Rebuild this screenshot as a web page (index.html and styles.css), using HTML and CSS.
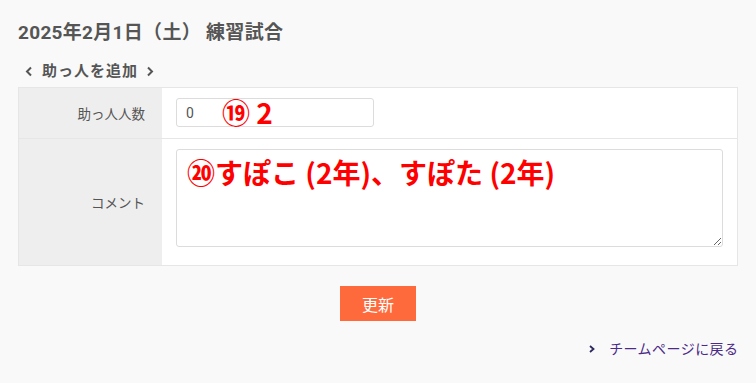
FILE: index.html
```html
<!DOCTYPE html>
<html lang="ja">
<head>
<meta charset="utf-8">
<link rel="stylesheet" href="styles.css">
</head>
<body>
<div class="page">
  <h1 class="title">2025年2月1日（土） 練習試合</h1>
  <div class="subhead">
    <svg class="chev" width="8" height="11" viewBox="0 0 8 11"><path d="M6 1.5 L2 5.5 L6 9.5" fill="none" stroke="#555" stroke-width="2"/></svg>
    <span class="subhead-text">助っ人を追加</span>
    <svg class="chev" width="8" height="11" viewBox="0 0 8 11"><path d="M2 1.5 L6 5.5 L2 9.5" fill="none" stroke="#555" stroke-width="2"/></svg>
  </div>
  <div class="form">
    <div class="row">
      <div class="label">助っ人人数</div>
      <div class="value">
        <input class="num" type="text" value="0">
        <span class="note note1">⑲ 2</span>
      </div>
    </div>
    <div class="row row2">
      <div class="label">コメント</div>
      <div class="value">
        <textarea class="comment"></textarea>
        <span class="note note2">⑳すぽこ (2年)、すぽた (2年)</span>
      </div>
    </div>
  </div>
  <div class="actions">
    <button class="btn">更新</button>
  </div>
  <div class="back">
    <svg class="back-chev" width="8" height="10" viewBox="0 0 8 10"><path d="M2 2 L5.5 5 L2 8" fill="none" stroke="#2b2a5c" stroke-width="1.8"/></svg>
    <a class="back-link" href="#">チームページに戻る</a>
  </div>
</div>
</body>
</html>
```

FILE: styles.css
```css
html, body {
  margin: 0;
  padding: 0;
  background: #f9f9f9;
}
body {
  font-family: Roboto, "Noto Sans CJK JP", sans-serif;
  color: #555;
}
.page {
  padding: 21px 18px 0 18px;
  width: 720px;
}
.title {
  margin: 0;
  font-size: 19px;
  font-weight: bold;
  line-height: 24px;
  color: #555;
  letter-spacing: 0.3px;
}
.subhead {
  display: flex;
  align-items: center;
  gap: 9px;
  margin-top: 16px;
  padding-left: 7px;
  height: 20px;
}
.subhead-text {
  font-size: 15px;
  font-weight: bold;
  line-height: 20px;
  letter-spacing: 1px;
  margin-right: -1px;
}
.chev { display: block; }
.form {
  margin-top: 6px;
  border: 1px solid #e6e6e6;
  background: #fff;
}
.row {
  display: flex;
}
.row2 {
  border-top: 1px solid #e6e6e6;
}
.label {
  width: 126px;
  flex: none;
  background: #eeeeee;
  display: flex;
  align-items: center;
  justify-content: flex-end;
  padding-right: 17px;
  font-size: 13.5px;
  color: #555;
}
.value {
  flex: 1;
  padding: 10px 14px 11px 14px;
  position: relative;
}
.row2 .value {
  padding-top: 10px;
  padding-bottom: 18px;
}
.num {
  display: block;
  box-sizing: border-box;
  width: 198px;
  height: 29px;
  border: 1px solid #dcdcdc;
  border-radius: 3px;
  padding: 0 9px;
  font-family: Roboto, "Noto Sans CJK JP", sans-serif;
  font-size: 14px;
  color: #555;
  background: #fff;
  margin: 0;
}
.comment {
  display: block;
  box-sizing: border-box;
  width: 100%;
  height: 98px;
  border: 1px solid #dcdcdc;
  border-radius: 3px;
  margin: 0;
  background: #fff;
}
.note {
  position: absolute;
  color: #ff0000;
  font-weight: bold;
  font-family: "Noto Sans CJK JP", sans-serif;
  white-space: nowrap;
}
.note1 {
  left: 60px;
  top: 7px;
  font-size: 28px;
  line-height: 34px;
}
.note2 {
  left: 25px;
  top: 16px;
  font-size: 28px;
  line-height: 34px;
}
.actions {
  display: flex;
  justify-content: center;
  margin-top: 20px;
}
.btn {
  width: 76px;
  height: 35px;
  border: none;
  background: #ff6a3d;
  color: #fff;
  font-family: Roboto, "Noto Sans CJK JP", sans-serif;
  font-size: 16px;
  padding: 0;
  cursor: pointer;
}
.back {
  display: flex;
  justify-content: flex-end;
  align-items: center;
  gap: 13px;
  margin-top: 18px;
}
.back-chev { display: block; }
.back-link {
  font-size: 14px;
  line-height: 20px;
  letter-spacing: 0.45px;
  margin-right: -0.5px;
  color: #4b2a88;
  text-decoration: none;
}
```
